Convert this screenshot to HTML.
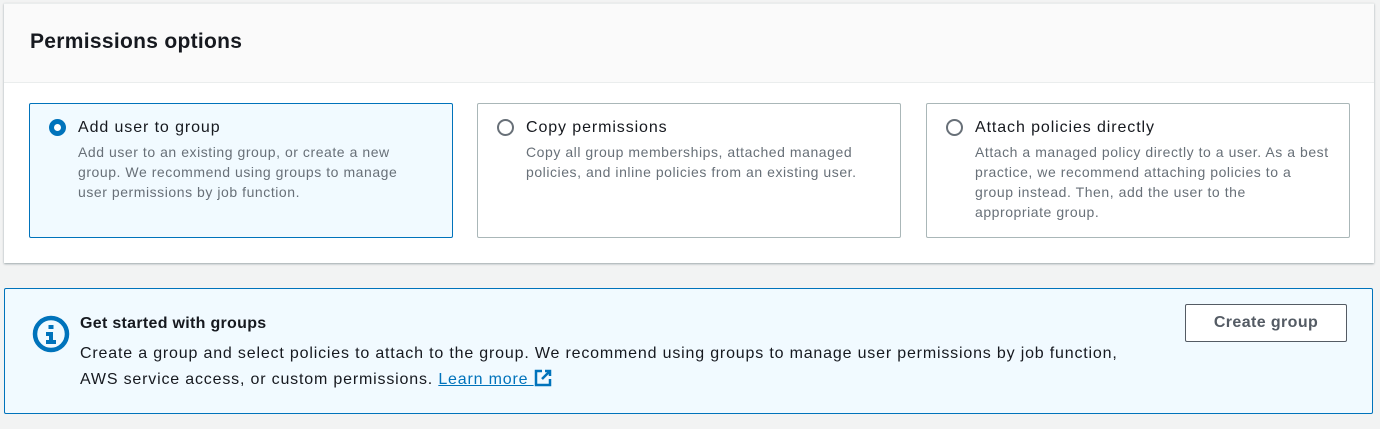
<!DOCTYPE html>
<html><head><style>
body{margin:0;background:#f2f3f3;font-family:"Liberation Sans",sans-serif;width:1380px;height:429px;position:relative;overflow:hidden;color:#16191f}
.card{position:absolute;left:4px;top:3px;width:1370px;height:259px;background:#fff;box-shadow:0 1px 2px rgba(0,28,36,.35);border-top:1px solid #eaeded}
.hdr{height:78px;background:#fafafa;border-bottom:1px solid #eaeded;position:relative}
.hdr h2{margin:0;position:absolute;left:26px;top:26px;font-size:21px;font-weight:bold;letter-spacing:.3px}
.tile{position:absolute;top:103px;width:424px;height:135px;border:1px solid #aab7b8;border-radius:2px;background:#fff;box-sizing:border-box}
.tile.sel{border-color:#0073bb;background:#f1faff}
.radio{position:absolute;left:19px;top:15px;width:17px;height:17px;border-radius:50%;border:2px solid #687078;box-sizing:border-box;background:#fff}
.sel .radio{border:5px solid #0073bb}
.lbl{position:absolute;left:48px;top:15px;font-size:16px;color:#16191f;letter-spacing:.9px}
.desc{position:absolute;left:48px;top:38px;width:340px;font-size:14px;line-height:20px;color:#687078;letter-spacing:.55px}
.alert{position:absolute;left:4px;top:288px;width:1369px;height:126px;box-sizing:border-box;border:1px solid #0073bb;border-radius:2px;background:#f1faff}
.at{position:absolute;left:75px;top:26px;font-size:16px;font-weight:bold;letter-spacing:.3px}
.ab{position:absolute;left:75px;top:52px;font-size:16px;line-height:26px;width:1060px;letter-spacing:.82px}
a{color:#0073bb}
.btn{position:absolute;left:1180px;top:15px;width:162px;height:38px;box-sizing:border-box;border:1px solid #545b64;border-radius:2px;background:#fff;font-weight:bold;font-size:16px;color:#545b64;text-align:center;line-height:36px;letter-spacing:.4px}
</style></head><body>
<div class="card">
<div class="hdr"><h2>Permissions options</h2></div>
</div>
<div class="tile sel" style="left:29px"><div class="radio"></div><div class="lbl">Add user to group</div><div class="desc">Add user to an existing group, or create a new group. We recommend using groups to manage user permissions by job function.</div></div>
<div class="tile" style="left:477px"><div class="radio"></div><div class="lbl">Copy permissions</div><div class="desc">Copy all group memberships, attached managed policies, and inline policies from an existing user.</div></div>
<div class="tile" style="left:926px"><div class="radio"></div><div class="lbl">Attach policies directly</div><div class="desc" style="width:356px">Attach a managed policy directly to a user. As a best practice, we recommend attaching policies to a group instead. Then, add the user to the<br>appropriate group.</div></div>
<div class="alert">
<svg style="position:absolute;left:27px;top:26px" width="38" height="38" viewBox="0 0 38 38"><circle cx="19" cy="19" r="16" fill="none" stroke="#0073bb" stroke-width="4.5"/><rect x="16.5" y="10" width="5" height="4" fill="#0073bb"/><path d="M14 17h7v8h3v4H14v-4h3v-4h-3z" fill="#0073bb"/></svg>
<div class="at">Get started with groups</div>
<div class="ab">Create a group and select policies to attach to the group. We recommend using groups to manage user permissions by job function, AWS service access, or custom permissions. <a href="#">Learn more </a><svg width="18" height="18" viewBox="0 0 18 18" style="vertical-align:-3px"><path d="M8 2H2v14h14v-6" fill="none" stroke="#0073bb" stroke-width="2.5"/><path d="M11 2h5v5M16 2l-8 8" fill="none" stroke="#0073bb" stroke-width="2.5"/></svg></div>
<div class="btn">Create group</div>
</div>
</body></html>
